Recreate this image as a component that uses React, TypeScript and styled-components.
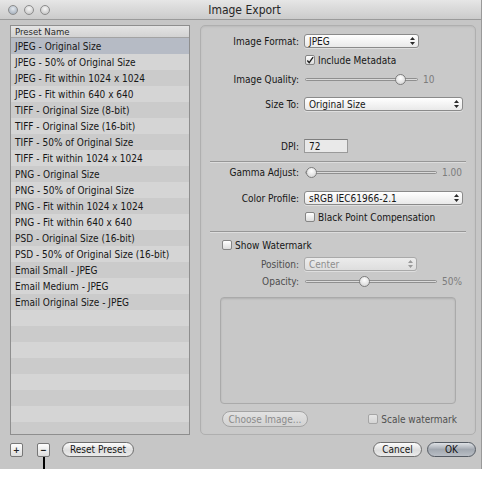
import React from "react";
import styled, { createGlobalStyle, css } from "styled-components";

const Global = createGlobalStyle`
  html, body { margin: 0; padding: 0; background: #ffffff; }
  body { font-family: "DejaVu Sans Condensed", "DejaVu Sans", sans-serif; font-size: 10px; color: #161616; }
  * { box-sizing: border-box; }
`;

const Window = styled.div`
  width: 482px;
  height: 469px;
  background: #c6c6c6;
  border-right: 1px solid #999999;
  display: flex;
  flex-direction: column;
`;

const TitleBar = styled.div`
  height: 20px;
  flex: none;
  display: grid;
  grid-template-columns: 1fr auto 1fr;
  align-items: center;
  background: linear-gradient(#e6e6e6, #cbcbcb);
  border-bottom: 1px solid #9a9a9a;
  padding-left: 8px;
`;

const Lights = styled.div`
  display: flex;
  gap: 6px;
`;

const Light = styled.span<{ $first?: boolean }>`
  width: 10px;
  height: 10px;
  border-radius: 50%;
  border: 1px solid #8c8c8c;
  background: ${(p) =>
    p.$first
      ? "radial-gradient(circle at 50% 35%, #e3e8ee, #98a4b2)"
      : "radial-gradient(circle at 50% 35%, #f7f7f7, #bdbdbd)"};
`;

const Title = styled.div`
  font-size: 12px;
  color: #262626;
  padding-top: 1px;
`;

const Body = styled.div`
  flex: 1;
  display: flex;
  flex-direction: column;
  padding: 5px 5px 0 10px;
`;

const Main = styled.div`
  display: flex;
  gap: 10px;
  height: 410px;
`;

const List = styled.div`
  width: 180px;
  border: 1px solid #8e8e8e;
  display: flex;
  flex-direction: column;
  overflow: hidden;
  background: #cdcdcd;
`;

const ListHeader = styled.div`
  height: 12px;
  flex: none;
  display: flex;
  align-items: center;
  padding-left: 4px;
  font-size: 9.5px;
  background: linear-gradient(#e4e4e4, #d3d3d3);
  border-bottom: 1px solid #a3a3a3;
  color: #2a2a2a;
`;

const ListRow = styled.div<{ $kind: "sel" | "light" | "dark" }>`
  height: 16px;
  flex: none;
  display: flex;
  align-items: center;
  padding-left: 4px;
  white-space: nowrap;
  background: ${(p) =>
    p.$kind === "sel" ? "#b6bbc5" : p.$kind === "light" ? "#d5d5d5" : "#cbcbcb"};
`;

const Panel = styled.div`
  width: 276px;
  border: 1px solid #afafaf;
  border-radius: 5px;
  background: #c9c9c9;
  box-shadow: inset 0 1px 2px rgba(0, 0, 0, 0.08);
  display: flex;
  flex-direction: column;
  padding-top: 8px;
`;

const FormRow = styled.div<{ $mt?: number }>`
  display: grid;
  grid-template-columns: 98px auto;
  column-gap: 5px;
  align-items: center;
  height: 14px;
  margin-top: ${(p) => p.$mt ?? 0}px;
`;

const Label = styled.span<{ $disabled?: boolean }>`
  text-align: right;
  white-space: nowrap;
  color: ${(p) => (p.$disabled ? "#4e4e4e" : "#161616")};
`;

const SelectBox = styled.div<{ $w: number; $disabled?: boolean }>`
  width: ${(p) => p.$w}px;
  height: 14px;
  border: 1px solid ${(p) => (p.$disabled ? "#a9a9a9" : "#8a8a8a")};
  border-radius: 3px;
  background: ${(p) =>
    p.$disabled ? "linear-gradient(#ececec, #dedede)" : "linear-gradient(#ffffff, #e9e9e9)"};
  color: ${(p) => (p.$disabled ? "#8e8e8e" : "#161616")};
  display: flex;
  align-items: center;
  justify-content: space-between;
  padding: 0 3px 0 4px;
  box-shadow: 0 1px 0 rgba(255, 255, 255, 0.4);
`;

const Arrows = ({ disabled }: { disabled?: boolean }) => (
  <svg width="5" height="8" viewBox="0 0 5 8">
    <path d="M2.5 0 L5 3 L0 3 Z M2.5 8 L5 5 L0 5 Z" fill={disabled ? "#9a9a9a" : "#2a2a2a"} />
  </svg>
);

const Select = ({ w, value, disabled }: { w: number; value: string; disabled?: boolean }) => (
  <SelectBox $w={w} $disabled={disabled}>
    <span>{value}</span>
    <Arrows disabled={disabled} />
  </SelectBox>
);

const CheckLine = styled.label<{ $indent?: number; $disabled?: boolean }>`
  display: flex;
  align-items: center;
  gap: 3px;
  margin-left: ${(p) => p.$indent ?? 0}px;
  white-space: nowrap;
  color: ${(p) => (p.$disabled ? "#505050" : "#161616")};
`;

const Box = styled.span<{ $disabled?: boolean }>`
  width: 10px;
  height: 10px;
  flex: none;
  border: 1px solid ${(p) => (p.$disabled ? "#a5a5a5" : "#858585")};
  border-radius: 2px;
  background: ${(p) =>
    p.$disabled ? "linear-gradient(#e6e6e6, #d4d4d4)" : "linear-gradient(#ffffff, #dcdcdc)"};
  display: flex;
  align-items: center;
  justify-content: center;
`;

const Check = ({ checked, disabled, label, indent }: { checked?: boolean; disabled?: boolean; label: string; indent?: number }) => (
  <CheckLine $indent={indent} $disabled={disabled}>
    <Box $disabled={disabled}>
      {checked && (
        <svg width="9" height="9" viewBox="0 0 9 9">
          <path d="M1.5 4.5 L3.6 7 L8 0.8" stroke="#1a1a1a" strokeWidth="1.5" fill="none" />
        </svg>
      )}
    </Box>
    <span>{label}</span>
  </CheckLine>
);

const SliderWrap = styled.div`
  display: flex;
  align-items: center;
  gap: 5px;
`;

const Track = styled.div<{ $w: number }>`
  position: relative;
  width: ${(p) => p.$w}px;
  height: 3px;
  margin-left: 1px;
  border: 1px solid #8f8f8f;
  border-radius: 2px;
  background: #dadada;
`;

const Knob = styled.span`
  position: absolute;
  top: 50%;
  width: 11px;
  height: 11px;
  margin-top: -5.5px;
  margin-left: -5.5px;
  border-radius: 50%;
  border: 1px solid #7d7d7d;
  background: radial-gradient(circle at 50% 35%, #ffffff, #cfcfcf);
`;

const SliderValue = styled.span`
  color: #7c7c7c;
`;

const Slider = ({ w, pos, value }: { w: number; pos: number; value: string }) => (
  <SliderWrap>
    <Track $w={w}>
      <Knob style={{ left: `${pos}px` }} />
    </Track>
    <SliderValue>{value}</SliderValue>
  </SliderWrap>
);

const Field = styled.div`
  width: 44px;
  height: 14px;
  border: 1px solid #9a9a9a;
  border-top-color: #7e7e7e;
  background: #e9e9e9;
  display: flex;
  align-items: center;
  padding-left: 4px;
`;

const Separator = styled.div<{ $mt: number }>`
  margin: ${(p) => p.$mt}px 9px 0 9px;
  height: 2px;
  border-top: 1px solid #979797;
  border-bottom: 1px solid #dddddd;
`;

const Well = styled.div`
  margin: 9px 19px 0 19px;
  height: 107px;
  border: 1px solid #aaaaaa;
  border-radius: 4px;
  background: #c8c8c8;
  box-shadow: inset 0 1px 2px rgba(0, 0, 0, 0.12);
`;

const WellActions = styled.div`
  margin-top: 7px;
  padding: 0 18px 0 21px;
  height: 16px;
  display: flex;
  align-items: center;
  justify-content: space-between;
`;

const Pill = styled.div<{ $w: number; $variant?: "default" | "primary" | "disabled" }>`
  height: 15px;
  border-radius: 8px;
  display: flex;
  align-items: center;
  justify-content: center;
  width: ${(p) => p.$w}px;
  ${(p) =>
    p.$variant === "primary"
      ? css`
          border: 1px solid #555b63;
          background: linear-gradient(#dfe2e6, #a2a8b0 50%, #b9bec5);
          color: #111;
        `
      : p.$variant === "disabled"
      ? css`
          height: 16px;
          border: 1px solid #a4a4a4;
          background: linear-gradient(#e2e2e2, #d2d2d2);
          color: #8a8a8a;
        `
      : css`
          border: 1px solid #6d6d6d;
          background: linear-gradient(#fdfdfd, #dddddd 55%, #ebebeb);
          color: #161616;
        `}
`;

const BottomBar = styled.div`
  margin-top: 7px;
  height: 15px;
  display: flex;
  align-items: center;
`;

const Square = styled.div<{ $callout?: boolean }>`
  position: relative;
  width: 13px;
  height: 14px;
  border: 1px solid #777777;
  border-radius: 2px;
  background: linear-gradient(#fefefe, #dcdcdc);
  display: flex;
  align-items: center;
  justify-content: center;
  font-weight: bold;
  font-size: 9px;
  color: #222;
  ${(p) =>
    p.$callout &&
    css`
      &::after {
        content: "";
        position: absolute;
        left: 5px;
        top: 13px;
        width: 2px;
        height: 36px;
        background: #000;
      }
    `}
`;

const Group = styled.div<{ $gap: number; $ml?: number; $push?: boolean }>`
  display: flex;
  align-items: center;
  gap: ${(p) => p.$gap}px;
  margin-left: ${(p) => (p.$push ? "auto" : `${p.$ml ?? 0}px`)};
`;

const presets = [
  "JPEG - Original Size",
  "JPEG - 50% of Original Size",
  "JPEG - Fit within 1024 x 1024",
  "JPEG - Fit within 640 x 640",
  "TIFF - Original Size (8-bit)",
  "TIFF - Original Size (16-bit)",
  "TIFF - 50% of Original Size",
  "TIFF - Fit within 1024 x 1024",
  "PNG - Original Size",
  "PNG - 50% of Original Size",
  "PNG - Fit within 1024 x 1024",
  "PNG - Fit within 640 x 640",
  "PSD - Original Size (16-bit)",
  "PSD - 50% of Original Size (16-bit)",
  "Email Small - JPEG",
  "Email Medium - JPEG",
  "Email Original Size - JPEG",
];

export default function App() {
  const rows = Array.from({ length: 25 }, (_, i) => presets[i] ?? "");
  return (
    <>
      <Global />
      <Window>
        <TitleBar>
          <Lights>
            <Light $first />
            <Light />
            <Light />
          </Lights>
          <Title>Image Export</Title>
          <span />
        </TitleBar>
        <Body>
          <Main>
            <List>
              <ListHeader>Preset Name</ListHeader>
              {rows.map((name, i) => (
                <ListRow key={i} $kind={i === 0 ? "sel" : i % 2 === 1 ? "light" : "dark"}>
                  {name}
                </ListRow>
              ))}
            </List>
            <Panel>
              <FormRow>
                <Label>Image Format:</Label>
                <Select w={115} value="JPEG" />
              </FormRow>
              <FormRow $mt={5}>
                <span />
                <Check checked label="Include Metadata" indent={1} />
              </FormRow>
              <FormRow $mt={5}>
                <Label>Image Quality:</Label>
                <Slider w={113} pos={94} value="10" />
              </FormRow>
              <FormRow $mt={11}>
                <Label>Size To:</Label>
                <Select w={159} value="Original Size" />
              </FormRow>
              <FormRow $mt={28}>
                <Label>DPI:</Label>
                <Field>72</Field>
              </FormRow>
              <Separator $mt={8} />
              <FormRow $mt={2}>
                <Label>Gamma Adjust:</Label>
                <Slider w={132} pos={5} value="1.00" />
              </FormRow>
              <FormRow $mt={12}>
                <Label>Color Profile:</Label>
                <Select w={159} value="sRGB IEC61966-2.1" />
              </FormRow>
              <FormRow $mt={5}>
                <span />
                <Check label="Black Point Compensation" indent={1} />
              </FormRow>
              <Separator $mt={7} />
              <FormRow $mt={5}>
                <Check label="Show Watermark" indent={21} />
              </FormRow>
              <FormRow $mt={5}>
                <Label $disabled>Position:</Label>
                <Select w={113} value="Center" disabled />
              </FormRow>
              <FormRow $mt={3}>
                <Label $disabled>Opacity:</Label>
                <Slider w={132} pos={58} value="50%" />
              </FormRow>
              <Well />
              <WellActions>
                <Pill $w={86} $variant="disabled">Choose Image...</Pill>
                <Check disabled label="Scale watermark" />
              </WellActions>
            </Panel>
          </Main>
          <BottomBar>
            <Group $gap={14}>
              <Square>+</Square>
              <Square $callout>−</Square>
            </Group>
            <Group $gap={0} $ml={12}>
              <Pill $w={72}>Reset Preset</Pill>
            </Group>
            <Group $gap={5} $push>
              <Pill $w={49}>Cancel</Pill>
              <Pill $w={49} $variant="primary">OK</Pill>
            </Group>
          </BottomBar>
        </Body>
      </Window>
    </>
  );
}
